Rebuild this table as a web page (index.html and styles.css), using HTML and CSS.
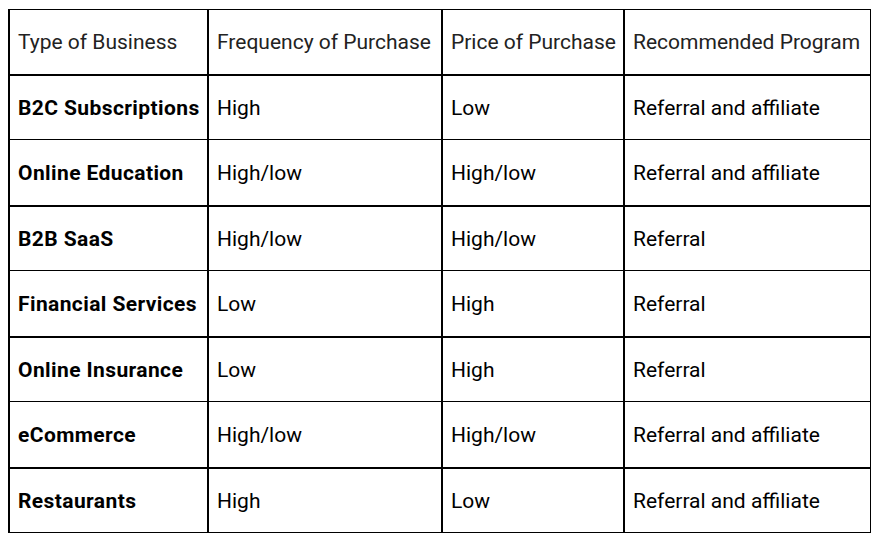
FILE: index.html
```html
<!DOCTYPE html>
<html>
<head>
<meta charset="utf-8">
<link rel="stylesheet" href="styles.css">
</head>
<body>
<table class="grid">
  <colgroup>
    <col class="c1"><col class="c2"><col class="c3"><col class="c4">
  </colgroup>
  <tr class="head thick h65">
    <td>Type of Business</td><td>Frequency of Purchase</td><td>Price of Purchase</td><td>Recommended Program</td>
  </tr>
  <tr class="h65">
    <td class="name">B2C Subscriptions</td><td>High</td><td>Low</td><td>Referral and affiliate</td>
  </tr>
  <tr class="thick h66">
    <td class="name">Online Education</td><td>High/low</td><td>High/low</td><td>Referral and affiliate</td>
  </tr>
  <tr class="h65">
    <td class="name">B2B SaaS</td><td>High/low</td><td>High/low</td><td>Referral</td>
  </tr>
  <tr class="thick h66">
    <td class="name">Financial Services</td><td>Low</td><td>High</td><td>Referral</td>
  </tr>
  <tr class="h65">
    <td class="name">Online Insurance</td><td>Low</td><td>High</td><td>Referral</td>
  </tr>
  <tr class="thick h66">
    <td class="name">eCommerce</td><td>High/low</td><td>High/low</td><td>Referral and affiliate</td>
  </tr>
  <tr class="h65">
    <td class="name">Restaurants</td><td>High</td><td>Low</td><td>Referral and affiliate</td>
  </tr>
</table>
</body>
</html>
```

FILE: styles.css
```css
html, body {
  background: #ffffff;
}
body {
  margin: 9px 0 0 8px;
  font-family: Roboto, "Liberation Sans", sans-serif;
  font-size: 21px;
  color: #000000;
}
.grid {
  border-collapse: collapse;
  table-layout: fixed;
  width: 861px;
}
.c1 { width: 199px; }
.c2 { width: 234px; }
.c3 { width: 182px; }
.c4 { width: 246px; }
.grid td {
  border-top: 1px solid #000;
  border-bottom: 1px solid #000;
  border-right: 2px solid #000;
  padding: 2px 0 0 8px;
  vertical-align: middle;
  white-space: nowrap;
  line-height: 24px;
}
.grid td:first-child {
  border-left: 2px solid #000;
}
.grid td:last-child {
  border-right: 1px solid #000;
}
.grid tr.thick td {
  border-bottom: 2px solid #000;
}
.grid tr.head td {
  padding-top: 0;
  color: #222222;
}
.h65 { height: 65px; }
.h66 { height: 66px; }
.name {
  font-weight: 700;
  letter-spacing: 0.4px;
}
```
